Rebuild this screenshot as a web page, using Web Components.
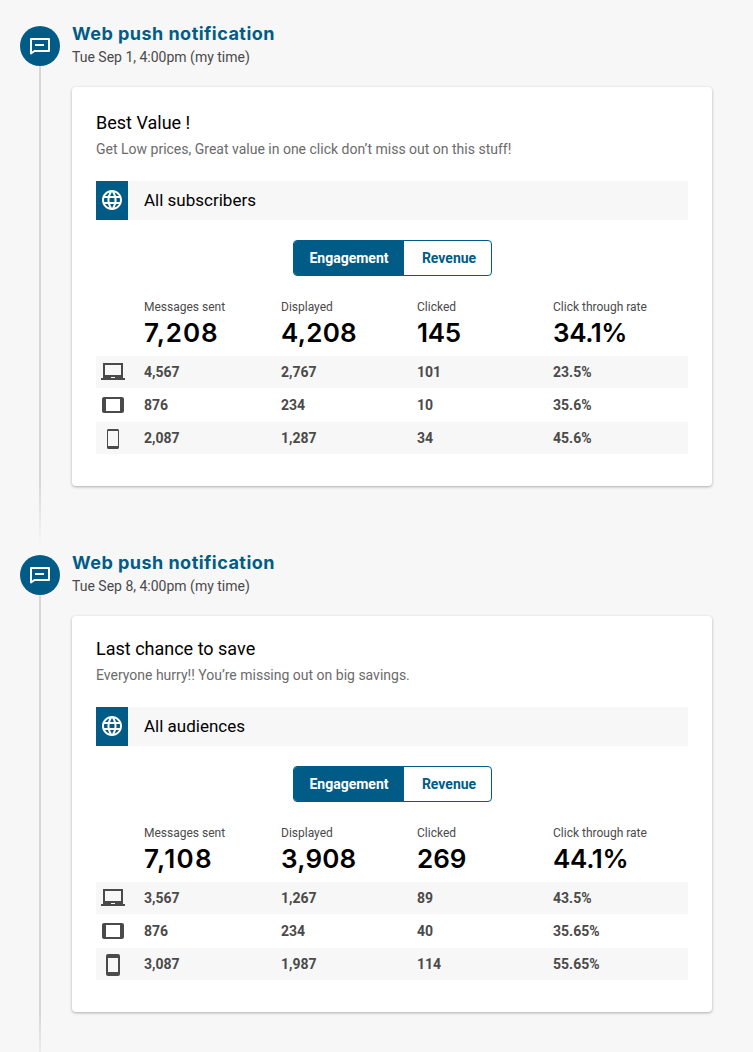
<!DOCTYPE html>
<html lang="en">
<head>
<meta charset="utf-8">
<title>Notification timeline</title>
<style>
html,body{margin:0;background:#f7f7f7}
body{font-family:Roboto,"Liberation Sans",sans-serif;color:#4a4a4a;height:1052px;overflow:hidden}
</style>
</head>
<body>
<push-timeline>
  <push-entry>
    <span slot="kind">Web push notification</span>
    <span slot="time">Tue Sep 1, 4:00pm (my time)</span>
    <push-card style="--card-top:24px">
      <span slot="title">Best Value !</span>
      <span slot="message">Get Low prices, Great value in one click don’t miss out on this stuff!</span>
      <audience-bar>All subscribers</audience-bar>
      <view-toggle></view-toggle>
      <stats-table totals="7,208|4,208|145|34.1%" tracking="0.9|0.25|-0.3|-0.4" laptop="4,567|2,767|101|23.5%" tablet="876|234|10|35.6%" phone="2,087|1,287|34|45.6%"></stats-table>
    </push-card>
  </push-entry>
  <push-entry>
    <span slot="kind">Web push notification</span>
    <span slot="time">Tue Sep 8, 4:00pm (my time)</span>
    <push-card style="--card-top:21px">
      <span slot="title">Last chance to save</span>
      <span slot="message">Everyone hurry!! You’re missing out on big savings.</span>
      <audience-bar>All audiences</audience-bar>
      <view-toggle></view-toggle>
      <stats-table wide-phone totals="7,108|3,908|269|44.1%" tracking="1.3|0.2|0|-0.3" laptop="3,567|1,267|89|43.5%" tablet="876|234|40|35.65%" phone="3,087|1,987|114|55.65%"></stats-table>
    </push-card>
  </push-entry>
</push-timeline>
<script>
const define = (name, html, init) => customElements.define(name, class extends HTMLElement {
  constructor() {
    super();
    this.attachShadow({mode: "open"}).innerHTML = html;
  }
  connectedCallback() { if (init) init(this, this.shadowRoot); }
});

define("push-timeline", `<style>:host{display:flex;flex-direction:column;padding:26px 0 0 20px}</style><slot></slot>`);

define("push-entry", `<style>
:host{display:grid;grid-template-columns:40px 641px;column-gap:12px;height:529px;flex:none}
.rail{display:flex;flex-direction:column;align-items:center}
.badge{width:40px;height:40px;border-radius:50%;background:#005c87;flex:none}
svg{display:block}
.line{width:2px;height:480px;background:linear-gradient(#d8d8d8 0,#d8d8d8 420px,rgba(216,216,216,0) 480px)}
.kind{font:700 18px/20px Inter,sans-serif;color:#005c87;margin-top:-2px;white-space:nowrap;letter-spacing:.47px}
.time{font-size:14px;line-height:20px;margin-top:3px;white-space:nowrap}
.card{margin-top:20px}
</style>
<div class="rail"><div class="badge"><svg width="40" height="40" viewBox="0 0 40 40" fill="none" stroke="#fff" stroke-width="2"><path d="M11 27.4V13h18v12H14.5z" stroke-linejoin="round"/><path d="M15 19h9"/></svg></div><div class="line"></div></div>
<div><div class="kind"><slot name="kind"></slot></div><div class="time"><slot name="time"></slot></div><div class="card"><slot></slot></div></div>`);

define("push-card", `<style>
:host{display:block;width:640px;box-sizing:border-box;padding:var(--card-top) 24px 32px;background:#fff;border-radius:4px;box-shadow:0 1px 3px rgba(0,0,0,.3)}
.title{font-size:18px;line-height:24px;color:#000}
.message{font-size:14px;line-height:20px;color:#6b6b6b;margin:4px 0 22px;white-space:nowrap}
</style><div class="title"><slot name="title"></slot></div><div class="message"><slot name="message"></slot></div><slot></slot>`);

define("audience-bar", `<style>
:host{display:flex;height:39px;background:#f7f7f7;color:#000;font-size:17px;line-height:39px}
.tile{width:32px;background:#005c87;margin-right:16px;display:flex;align-items:center;justify-content:center}
svg{margin-bottom:1px}
</style><div class="tile"><svg width="24" height="24" viewBox="0 0 24 24" fill="#fff"><path d="M11.99 2C6.47 2 2 6.48 2 12s4.47 10 9.99 10C17.52 22 22 17.52 22 12S17.52 2 11.99 2zm6.93 6h-2.95c-.32-1.25-.78-2.45-1.38-3.56 1.84.63 3.37 1.91 4.33 3.56zM12 4.04c.83 1.2 1.48 2.53 1.91 3.96h-3.82c.43-1.43 1.08-2.76 1.91-3.96zM4.26 14C4.1 13.36 4 12.69 4 12s.1-1.36.26-2h3.38c-.08.66-.14 1.32-.14 2s.06 1.34.14 2H4.26zm.82 2h2.95c.32 1.25.78 2.45 1.38 3.56-1.84-.63-3.37-1.9-4.33-3.56zm2.95-8H5.08c.96-1.66 2.49-2.93 4.33-3.56C8.81 5.55 8.35 6.75 8.03 8zM12 19.96c-.83-1.2-1.48-2.53-1.91-3.96h3.82c-.43 1.43-1.08 2.76-1.91 3.96zM14.34 14H9.66c-.09-.66-.16-1.32-.16-2s.07-1.35.16-2h4.68c.09.65.16 1.32.16 2s-.07 1.34-.16 2zm.25 5.56c.6-1.11 1.06-2.31 1.38-3.56h2.95c-.96 1.65-2.49 2.93-4.33 3.56zM16.36 14c.08-.66.14-1.32.14-2s-.06-1.34-.14-2h3.38c.16.64.26 1.31.26 2s-.1 1.36-.26 2h-3.38z"/></svg></div><slot></slot>`);

define("view-toggle", `<style>
:host{display:flex;width:199px;height:36px;box-sizing:border-box;border:1px solid #005c87;border-radius:4px;margin:20px auto 0 197px;font-weight:700;font-size:14px;line-height:34px;color:#005c87;overflow:hidden}
.on{width:110px;background:#005c87;color:#fff;text-align:center;box-sizing:border-box}
.off{flex:1;text-align:center;padding-left:3px}
</style><div class="on">Engagement</div><div class="off">Revenue</div>`);

define("stats-table", `<style>
:host{display:block;margin-top:20px}
.row{display:grid;grid-template-columns:48px 137px 136px 136px 135px}
.labels{font-size:12px;line-height:22px;height:22px}
.totals{font:600 26px/30px Inter,sans-serif;color:#000;height:30px;margin-bottom:8px}
.device{height:32px;line-height:32px;font-size:14px;font-weight:700;margin-bottom:1px}
.device.shade{background:#f7f7f7}
.device:last-child{margin-bottom:0}
svg{display:block;margin:4px 0 0 5px;fill:#4a4a4a}
</style><div class="row labels"><span></span><span>Messages sent</span><span>Displayed</span><span>Clicked</span><span>Click through rate</span></div>`, (el, root) => {
  const icons = {
    laptop: "M22 18V3H2v15H0v2h24v-2h-2zm-8 0h-4v-1h4v1zm6-3H4V5h16v10z",
    tablet: "M21 4H3c-1.1 0-2 .9-2 2v12c0 1.1.9 2 2 2h18c1.1 0 1.99-.9 1.99-2L23 6c0-1.1-.9-2-2-2zm-2 14H5V6h14v12z",
    phone: el.hasAttribute("wide-phone")
      ? "M17 2.01L7 2c-1.1 0-1.99.9-1.99 2v18c0 1.1.89 2 1.99 2h10c1.1 0 2-.9 2-2V4c0-1.1-.9-1.99-2-1.99zM17 20H7V6h10v14z"
      : "M16.5 3h-9C6.7 3 6 3.7 6 4.5v17c0 .8.7 1.500 1.500 1.500h9c.8 0 1.500-.7 1.500-1.500v-17C18 3.700 17.300 3 16.500 3zM17 20H7V5h10z"
  };
  const tracking = el.getAttribute("tracking").split("|");
  const cells = (name, spaced) => el.getAttribute(name).split("|")
    .map((t, i) => `<span${spaced ? ` style="letter-spacing:${tracking[i]}px"` : ""}>${t}</span>`).join("");
  let html = `<div class="row totals"><span></span>${cells("totals", true)}</div>`;
  Object.keys(icons).forEach((name, i) => {
    html += `<div class="row device${i % 2 ? "" : " shade"}"><svg width="24" height="24" viewBox="0 0 24 24"><path d="${icons[name]}"/></svg>${cells(name)}</div>`;
  });
  root.querySelector(".labels").insertAdjacentHTML("afterend", html);
});
</script>
</body>
</html>
